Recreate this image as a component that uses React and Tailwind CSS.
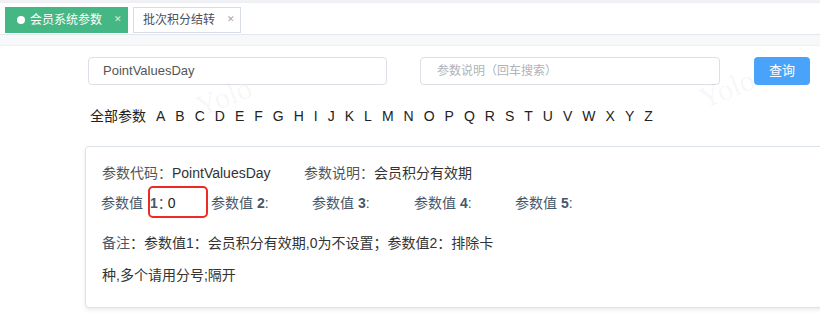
import React from "react";

const letters = "ABCDEFGHIJKLMNOPQRSTUVWXYZ".split("");

export default function App() {
  return (
    <div
      className="relative w-[820px] h-[320px] overflow-hidden bg-white"
      style={{ fontFamily: '"Liberation Sans", "Noto Sans CJK SC", sans-serif' }}
    >
      {/* tags bar */}
      <div className="h-[3px] bg-[#f0f2f5]" />
      <div className="flex h-[32px] items-start gap-[5px] bg-white pl-[5px] pt-[4px] border-b border-[#e4e7ed] shadow-[0_1px_3px_rgba(0,0,0,0.08)]">
        <div className="flex h-[26px] w-[123px] items-center bg-[#45b784] pl-[12px] text-[12px] text-white">
          <span className="mr-[5px] h-[8px] w-[8px] rounded-full bg-white" />
          <span>会员系统参数</span>
          <span className="ml-[12px] text-[9px] text-[#d6efe2]">✕</span>
        </div>
        <div className="flex h-[26px] w-[108px] items-center border border-[#d8dce5] bg-white pl-[9px] text-[12px] text-[#495060]">
          <span>批次积分结转</span>
          <span className="ml-[12px] text-[9px] text-[#a0a5ae]">✕</span>
        </div>
      </div>
      <div className="h-[11px] bg-[#f7f8fa] border-b border-[#eef0f3]" />

      {/* search row */}
      <div className="flex items-center pl-[88px] pt-[11px]">
        <div className="flex h-[28px] w-[299px] items-center rounded-[4px] border border-[#dcdfe6] pl-[14px] text-[13px] text-[#555]">
          PointValuesDay
        </div>
        <div className="ml-[33px] flex h-[28px] w-[300px] items-center rounded-[4px] border border-[#dcdfe6] pl-[16px] text-[12px] text-[#b0b3b8]">
          参数说明（回车搜索）
        </div>
        <div className="ml-[34px] flex h-[28px] w-[56px] items-center justify-center rounded-[4px] bg-[#4aa3fb] text-[13px] text-white">
          查询
        </div>
      </div>

      {/* letters */}
      <div className="flex items-center gap-[10px] pl-[90px] pt-[21px] text-[14px] text-[#222]">
        <span>全部参数</span>
        {letters.map((l) => (
          <span key={l}>{l}</span>
        ))}
      </div>

      {/* card */}
      <div className="ml-[85px] mt-[19px] h-[162px] w-[760px] rounded-[4px] border border-[#dde2ea] bg-white shadow-[0_2px_4px_rgba(0,0,0,0.08)] pl-[16px] pt-[15px] text-[14px] text-[#333]">
        <div className="flex h-[22px] items-center">
          <span className="w-[202px]">
            <span className="text-[#555]">参数代码：</span>PointValuesDay
          </span>
          <span>
            <span className="text-[#555]">参数说明：</span>会员积分有效期
          </span>
        </div>
        <div className="flex h-[30px] items-center mt-[4px] text-[#48576a]">
          <span className="ml-[-1px] w-[47px]">参数值</span>
          <span className="relative w-[63px] pl-[2px]">
            <span className="font-bold">1</span>：<span className="ml-[-4px] text-[#222]">0</span>
            <span className="absolute left-[0px] top-[-7px] h-[32px] w-[60px] rounded-[5px] border-2 border-[#ee2a24]" />
          </span>
          <span className="w-[101px]">
            参数值 <span className="font-bold">2</span>:
          </span>
          <span className="w-[102px]">
            参数值 <span className="font-bold">3</span>:
          </span>
          <span className="w-[101px]">
            参数值 <span className="font-bold">4</span>:
          </span>
          <span>
            参数值 <span className="font-bold">5</span>:
          </span>
        </div>
        <div className="mt-[9px] w-[400px] leading-[32px] text-[#333]">
          <span className="text-[#48576a]">备注</span>：参数值1：会员积分有效期,0为不设置；参数值2：排除卡种,多个请用分号;隔开
        </div>
      </div>

      {/* watermark */}
      <div
        className="pointer-events-none absolute left-[195px] top-[74px] -rotate-[22deg] text-[30px] text-[rgba(0,0,0,0.05)]"
        style={{ fontFamily: '"Liberation Serif", serif' }}
      >
        Yolo
      </div>
      <div
        className="pointer-events-none absolute left-[698px] top-[66px] -rotate-[22deg] text-[30px] text-[rgba(0,0,0,0.05)]"
        style={{ fontFamily: '"Liberation Serif", serif' }}
      >
        Yolo
      </div>
    </div>
  );
}
